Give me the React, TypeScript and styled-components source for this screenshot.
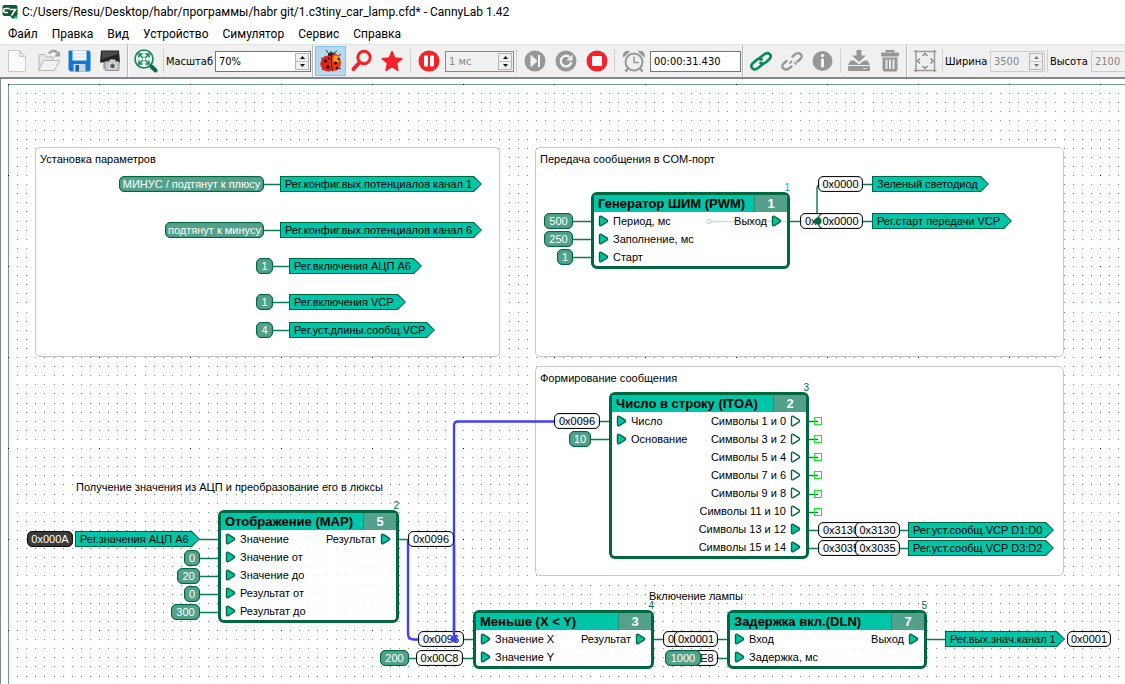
import React from "react";
import styled, { createGlobalStyle, css } from "styled-components";

const color = {
  ink: "#00683f",
  teal: "#00c5a8",
  sage: "#53a18b",
  blue: "#4040fa",
  chrome: "#f0f0f0",
  red: "#f5222a",
  gray: "#979797",
};

const Global = createGlobalStyle`
  *, *::before, *::after { box-sizing: border-box; }
  body { margin: 0; background: #fff; color: #000; }
  button, input { font: inherit; color: inherit; margin: 0; padding: 0; }
`;

/* ---------- window chrome ---------- */

const Window = styled.div`
  display: flex;
  flex-direction: column;
  height: 100vh;
  overflow: hidden;
  font-family: Roboto, "Open Sans", sans-serif;
  font-size: 12px;
`;

const TitleBar = styled.header`
  display: flex;
  flex: none;
  align-items: center;
  gap: 4px;
  height: 23px;
  padding-left: 2px;
`;

const WindowTitle = styled.h1`
  margin: 0;
  font-size: 12px;
  font-weight: 400;
  line-height: 20px;
  white-space: nowrap;
`;

const MenuBar = styled.nav`
  display: flex;
  flex: none;
  height: 21px;
  padding-left: 1px;
`;

const MenuItem = styled.button`
  border: 0;
  padding: 0 7px;
  background: transparent;
  line-height: 20px;
  white-space: nowrap;
`;

const Toolbar = styled.div`
  display: flex;
  flex: none;
  align-items: center;
  height: 33px;
  padding-left: 2px;
  overflow: hidden;
  background: ${color.chrome};
  border-top: 1px solid #e4e4e4;
  font-family: "DejaVu Sans Condensed", "DejaVu Sans", sans-serif;
  font-size: 11px;
`;

const ToolButton = styled.button<{ $active?: boolean }>`
  display: flex;
  flex: none;
  align-items: center;
  justify-content: center;
  width: 31px;
  height: 30px;
  border: 1px solid ${(p) => (p.$active ? "#7cc4f0" : "transparent")};
  background: ${(p) => (p.$active ? "#b4daf2" : "transparent")};
`;

const Divider = styled.span`
  flex: none;
  width: 1px;
  height: 24px;
  margin: 0 2px;
  background: #d0d0d0;
`;

const SectionEdge = styled.span`
  flex: none;
  width: 2px;
  height: 33px;
  margin: 0 1px;
  border-left: 1px solid #b8b8b8;
  border-right: 1px solid #fff;
`;

const FieldLabel = styled.label<{ $width: number }>`
  flex: none;
  width: ${(p) => p.$width}px;
  white-space: nowrap;
`;

type Tone = "normal" | "muted" | "light";

const Field = styled.span<{ $width: number; $tone: Tone; $indent?: number }>`
  display: flex;
  flex: none;
  width: ${(p) => p.$width}px;
  height: 21px;
  margin-left: ${(p) => p.$indent ?? 0}px;
  padding: 1px;
  border: 1px solid ${(p) => ({ normal: "#777", muted: "#888", light: "#ccc" })[p.$tone]};
  background: ${(p) => (p.$tone === "normal" ? "#fff" : color.chrome)};
  color: ${(p) => (p.$tone === "normal" ? "#000" : "#858585")};
`;

const FieldInput = styled.input`
  flex: 1;
  min-width: 0;
  padding-left: 2px;
  border: 0;
  outline: 0;
  background: transparent;
`;

const Stepper = styled.span`
  display: flex;
  flex: none;
  flex-direction: column;
  width: 14px;
  border: 1px solid #b5b5b5;
`;

const StepButton = styled.button`
  display: flex;
  flex: 1;
  align-items: center;
  justify-content: center;
  min-height: 0;
  border: 0;
  background: ${color.chrome};
  & + & {
    border-top: 1px solid #c4c4c4;
  }
`;

function NumberField(props: {
  id: string;
  value: string;
  width: number;
  tone: Tone;
  indent?: number;
  label?: string;
}) {
  const arrow = props.tone === "light" ? "#777" : "#111";
  return (
    <Field $width={props.width} $tone={props.tone} $indent={props.indent}>
      <FieldInput id={props.id} defaultValue={props.value} disabled={props.tone !== "normal"} aria-label={props.label} />
      <Stepper>
        <StepButton aria-label="Больше">
          <svg width="5" height="3"><path d="M0 3L2.5 0L5 3z" fill={arrow} /></svg>
        </StepButton>
        <StepButton aria-label="Меньше">
          <svg width="5" height="3"><path d="M0 0L2.5 3L5 0z" fill={arrow} /></svg>
        </StepButton>
      </Stepper>
    </Field>
  );
}

/* ---------- icons ---------- */

const Icon = ({ children, size = 24 }: { children: React.ReactNode; size?: number }) => (
  <svg width={size} height={size} viewBox="0 0 24 24" fill="none" aria-hidden="true">{children}</svg>
);

const LogoIcon = () => (
  <svg width="16" height="16" viewBox="0 0 16 16" aria-hidden="true">
    <path d="M2 1h12l1.500 1v9l-4.500 4l-3-3H2L.5 10.500V2z" fill="#0e5a36" />
    <path d="M7.500 4.500H3.500Q1.500 4.500 1.500 6.500T3.500 8.500H6" fill="none" stroke="#fff" strokeWidth="1.600" />
    <path d="M7.500 5.500H13.500L9.500 11.500" fill="none" stroke="#fff" strokeWidth="1.600" />
    <path d="M11 14.500l2-2.500h2.500v2.500z" fill="#35b27a" />
  </svg>
);

const NewIcon = () => (
  <Icon>
    <path d="M2.500 1.500H13.500L19.500 7.500V22.500H2.500z" fill="#fafafa" stroke="#c8c8c8" />
    <path d="M13.500 1.500V7.500H19.500z" fill="#e4e4e4" stroke="#c8c8c8" />
  </Icon>
);
const OpenIcon = () => (
  <Icon>
    <path d="M2 20V6.500Q2 5.500 3 5.500H8L9.500 8H16V11" fill="#e6e6e6" stroke="#b5b5b5" />
    <path d="M1.500 21.500L6.500 11.500H22.500L17.500 21.500z" fill="#f1f1f1" stroke="#b5b5b5" />
    <path d="M12 4.500Q16-.5 20.500 4" stroke="#a0a0a0" strokeWidth="2.500" />
    <path d="M23 2V7.500H17z" fill="#a0a0a0" />
  </Icon>
);
const SaveIcon = () => (
  <Icon>
    <path d="M1.500 1.500H21L22.500 3V21.500L21 22.500H2.500L.5 20.500V2.500z" fill="#1179d2" />
    <path d="M4.500 1.500H18.500V11.500H4.500z" fill="#f4f8fb" />
    <path d="M5 5H18M5 8H18" stroke="#d3dae0" />
    <path d="M5.500 15H17.500V22.500H5.500z" fill="#c9d6e0" />
    <path d="M7.500 16H11V22.500H7.500z" fill="#1463a8" />
  </Icon>
);
const CameraIcon = () => (
  <Icon>
    <path d="M2 1.500H20L21 13.500H1z" fill="#242424" />
    <path d="M3 2.500H19V5L3 10z" fill="#4a4a4a" />
    <path d="M4 13.500H9V20H4z" fill="#b5b5b5" />
    <rect x="6" y="12.500" width="14" height="9" rx="1" fill="#c9c9cd" stroke="#8d8d92" />
    <path d="M10 12.500L11 10.500H16L17 12.500" fill="#dedee0" />
    <circle cx="13.500" cy="17" r="3.300" fill="#8a8a90" stroke="#eee" />
    <circle cx="13.500" cy="17" r="1.400" fill="#444" />
  </Icon>
);
const FitIcon = () => (
  <Icon>
    <circle cx="10" cy="10" r="9" fill="#e2f2ea" stroke="#16805a" strokeWidth="1.600" />
    <path d="M5.500 5.500L14.500 14.500M14.500 5.500L5.500 14.500" stroke="#16805a" strokeWidth="1.400" />
    <path d="M8.800 8.800H11.200V11.200H8.800z" fill="#e2f2ea" />
    <path d="M5 8.500V5H8.500M11.500 5H15V8.500M15 11.500V15H11.500M8.500 15H5V11.500" stroke="#16805a" strokeWidth="1.500" />
    <path d="M17.500 17.500L21.500 21.500" stroke="#0d6b48" strokeWidth="4" strokeLinecap="round" />
  </Icon>
);
const BugIcon = () => (
  <Icon>
    <path d="M7 1L10 5M18 1.500L14 5.500M12 2V5M22 5L18 8M2 9L5 11M1 15H4M3 21L6 18M22 14H20M22 20L18 18" stroke="#222" />
    <path d="M9 4.500Q14 2 18 6L15 9L9 8z" fill="#20262a" />
    <ellipse cx="9" cy="14.500" rx="7.500" ry="8" fill="#e2231a" />
    <ellipse cx="16" cy="13.500" rx="6" ry="8.500" fill="#ee3b16" />
    <ellipse cx="17" cy="10" rx="3" ry="3.500" fill="#f9a01b" />
    <path d="M12.500 6.500Q11 14 14 22.500" stroke="#4a0d08" />
    <circle cx="6.500" cy="12" r="1.600" fill="#200" /><circle cx="9" cy="18" r="1.700" fill="#200" />
    <circle cx="16.500" cy="14" r="1.600" fill="#200" /><circle cx="18" cy="19" r="1.300" fill="#200" />
    <circle cx="10" cy="9.500" r="1.100" fill="#200" /><circle cx="19.500" cy="10" r="1.100" fill="#200" />
  </Icon>
);
const FindIcon = () => (
  <Icon>
    <circle cx="14" cy="8.500" r="6.200" stroke={color.red} strokeWidth="3" />
    <path d="M9.500 13.500L3.500 20" stroke={color.red} strokeWidth="4" strokeLinecap="round" />
  </Icon>
);
const StarIcon = () => (
  <Icon>
    <path d="M11 2.500L13.800 9L20.800 9.700L15.500 14.300L17 21.300L11 17.700L5 21.300L6.500 14.300L1.200 9.700L8.200 9z" fill={color.red} stroke={color.red} strokeWidth="1.500" strokeLinejoin="round" />
  </Icon>
);
const PauseIcon = () => (
  <Icon>
    <circle cx="12" cy="12" r="10.500" fill={color.red} />
    <rect x="7" y="6.500" width="4" height="11" rx="1" fill="#fff" /><rect x="13" y="6.500" width="4" height="11" rx="1" fill="#fff" />
  </Icon>
);
const StepIcon = () => (
  <Icon>
    <circle cx="12" cy="12" r="10.500" fill={color.gray} />
    <path d="M8 6.500L14 12L8 17.500z" fill="#f4f4f4" stroke="#f4f4f4" strokeLinejoin="round" />
    <path d="M16 6V18" stroke="#f4f4f4" strokeWidth="2" />
  </Icon>
);
const ReloadIcon = () => (
  <Icon>
    <circle cx="12" cy="12" r="10.500" fill={color.gray} />
    <path d="M15.500 8A5.300 5.300 0 1 0 17.300 13" stroke="#f4f4f4" strokeWidth="2.400" />
    <path d="M18.500 5.500V11.500H12.500z" fill="#f4f4f4" />
  </Icon>
);
const StopIcon = () => (
  <Icon>
    <circle cx="12" cy="12" r="10.500" fill={color.red} />
    <rect x="7" y="7" width="10" height="10" rx="1" fill="#fff" />
  </Icon>
);
const ClockIcon = () => (
  <Icon>
    <circle cx="13" cy="13" r="8.500" stroke={color.gray} strokeWidth="2" />
    <path d="M13 7.500V13.500H18" stroke={color.gray} strokeWidth="1.500" />
    <path d="M2.500 7.500Q2.500 2 8 2.500z" fill={color.gray} stroke={color.gray} strokeWidth="1.500" strokeLinejoin="round" />
    <path d="M23.200 7.500Q23.200 2 18 2.500z" fill={color.gray} stroke={color.gray} strokeWidth="1.500" strokeLinejoin="round" />
    <path d="M7 19.500L4.500 22.500M19 19.500L21.500 22.500" stroke={color.gray} strokeWidth="2.500" />
  </Icon>
);
const LinkIcon = () => (
  <Icon>
    <g stroke="#06895c" strokeWidth="2.700" strokeLinecap="round">
      <path d="M10 9.500L15 5.500Q18 3 20.500 5T20.500 10L16.500 13.500Q14 15.500 11.500 14" />
      <path d="M14 15L9 19Q6 21.500 3.500 19.500T3.500 14.500L7.500 11Q10 9 12.500 10.500" />
    </g>
  </Icon>
);
const UnlinkIcon = () => (
  <Icon>
    <g stroke={color.gray} strokeWidth="2.300" strokeLinecap="round">
      <path d="M12.500 7.500L15 5.500Q18 3 20.500 5T20.500 10L17.500 12.500" />
      <path d="M11.500 17.500L9 19.500Q6 21.500 3.500 19.500T3.500 14.500L6.500 12" />
      <path d="M10 14L11.500 12.500M16 15L15 13.500" strokeWidth="1.800" />
    </g>
  </Icon>
);
const InfoIcon = () => (
  <Icon>
    <circle cx="11.500" cy="12" r="10" fill={color.gray} />
    <circle cx="11.500" cy="6.500" r="1.700" fill="#f4f4f4" />
    <rect x="10" y="9.500" width="3" height="9" rx="1" fill="#f4f4f4" />
  </Icon>
);
const DownloadIcon = () => (
  <Icon>
    <path d="M9.500 1H14.500V6.500H19L12 13L5 6.500H9.500z" fill={color.gray} />
    <path d="M3.500 11.500H7L12 15.500L17 11.500H20.500L23 16H1z" fill={color.gray} />
    <rect x="1" y="17" width="22" height="5" rx="1" fill={color.gray} />
    <path d="M16 19.500H20" stroke="#ddd" />
  </Icon>
);
const TrashIcon = () => (
  <Icon>
    <path d="M8.500 3.500V2H15.500V3.500" stroke={color.gray} strokeWidth="2" />
    <rect x="3" y="3.500" width="18" height="4" rx="1" fill={color.gray} />
    <path d="M4.500 8.500H19.500V21L18 22.500H6L4.500 21z" fill={color.gray} />
    <path d="M8.500 10.500V20M12 10.500V20M15.500 10.500V20" stroke="#f0f0f0" strokeWidth="1.800" />
  </Icon>
);
const FrameIcon = () => (
  <Icon>
    <path d="M3 1V23M21.500 1V23M1 2.500H23.500M1 21.500H23.500" stroke="#999" strokeWidth="1.500" />
    <path d="M9.500 7L12 4.500L14.500 7M9.500 17L12 19.500L14.500 17M7 9.500L4.500 12L7 14.500M17.500 9.500L20 12L17.500 14.500" stroke="#888" strokeWidth="1.500" />
  </Icon>
);

/* ---------- diagram ---------- */

const Workspace = styled.main`
  flex: 1;
  min-height: 0;
  padding: 5px 0 0 7px;
  overflow: hidden;
  border-top: 2px solid #828790;
  border-left: 1px solid #828790;
  background: #fff;
`;

const Sheet = styled.div`
  position: relative;
  height: 100%;
  font-family: "Liberation Sans", Arial, sans-serif;
  font-size: 11px;
  line-height: 14px;
`;

const Layer = styled.svg`
  position: absolute;
  inset: 0;
  width: 100%;
  height: 100%;
`;

interface Spot {
  $x: number;
  $y: number;
  $w?: number;
}

const placed = css<Spot>`
  position: absolute;
  left: ${(p) => p.$x}px;
  top: ${(p) => p.$y}px;
  ${(p) => p.$w && `width: ${p.$w}px;`}
`;

const Group = styled.section<Spot>`
  ${placed}
  height: 210px;
  padding: 4px;
  border: 1px solid #c8c8c8;
  border-radius: 5px;
  background: #fff;
`;

const Caption = styled.p<Spot>`
  ${placed}
  margin: 0;
  white-space: nowrap;
`;

const GroupTitle = styled.h2`
  margin: 0;
  font-size: 11px;
  font-weight: 400;
`;

const pill = css`
  ${placed}
  height: 16px;
  border-radius: 5px;
  text-align: center;
  white-space: nowrap;
`;

const Constant = styled.div<Spot>`
  ${pill}
  border: 1px solid ${color.ink};
  box-shadow: inset 0 0 1px ${color.ink};
  background: ${color.sage};
  color: #fff;
`;

const Value = styled.div<Spot & { $dark?: boolean }>`
  ${pill}
  border: 1px solid #111;
  box-shadow: inset 0 0 1px #111;
  background: ${(p) => (p.$dark ? "#3c3c3c" : "rgba(255, 255, 255, 0.88)")};
  color: ${(p) => (p.$dark ? "#fff" : "#000")};
`;

const arrowShape = css`
  clip-path: polygon(0 0, calc(100% - 8px) 0, 100% 50%, calc(100% - 8px) 100%, 0 100%);
`;

const RegisterEdge = styled.div<Spot>`
  ${placed}
  ${arrowShape}
  height: 16px;
  padding: 1px;
  background: ${color.ink};
`;

const RegisterName = styled.div`
  ${arrowShape}
  padding-left: 4px;
  background: ${color.teal};
  white-space: nowrap;
`;

const Register = ({ x, y, w, children }: { x: number; y: number; w: number; children: string }) => (
  <RegisterEdge $x={x} $y={y} $w={w}>
    <RegisterName>{children}</RegisterName>
  </RegisterEdge>
);

const BlockFrame = styled.article<Spot>`
  ${placed}
  border: 3px solid ${color.ink};
  border-radius: 6px;
  background: rgba(255, 255, 255, 0.8);
`;

const BlockHeader = styled.header`
  display: flex;
  height: 17px;
  background: ${color.teal};
  font-size: 13px;
  font-weight: 700;
  line-height: 17px;
  white-space: nowrap;
`;

const BlockName = styled.h3`
  flex: 1;
  min-width: 0;
  margin: 0;
  padding-left: 4px;
  font-size: 13px;
`;

const BlockId = styled.span`
  flex: none;
  width: 33px;
  border-left: 1px solid #2b8a70;
  background: ${color.sage};
  color: #fff;
  text-align: center;
`;

const Order = styled.span<{ $first?: boolean }>`
  position: absolute;
  right: -3px;
  bottom: calc(100% + 2px);
  color: ${(p) => (p.$first ? "#1a9fdc" : color.ink)};
  font-size: 10px;
  line-height: 11px;
`;

const Ports = styled.div`
  display: flex;
  justify-content: space-between;
  padding: 0 5px 0 4px;
`;

const PortList = styled.ul`
  margin: 0;
  padding: 0;
  list-style: none;
`;

const Port = styled.li`
  display: flex;
  align-items: center;
  justify-content: flex-end;
  gap: 4px;
  height: 18px;
  white-space: nowrap;
`;

const InputPort = styled(Port)`
  justify-content: flex-start;
`;

const PortMark = ({ hollow }: { hollow?: boolean }) => (
  <svg width="11" height="12" viewBox="0 0 11 12" aria-hidden="true">
    <path d="M1.500 2.500Q1.500 .7 3.200 1.300L8.800 4.800Q10.300 6 8.800 7.200L3.200 10.700Q1.500 11.300 1.500 9.500z" fill={hollow ? "#fff" : color.teal} stroke={color.ink} strokeWidth="1.400" />
  </svg>
);

interface BlockProps {
  x: number;
  y: number;
  w: number;
  name: string;
  id: number;
  order: number;
  inputs: string[];
  outputs: string[];
  unused?: number;
}

function Block({ x, y, w, name, id, order, inputs, outputs, unused = 0 }: BlockProps) {
  return (
    <BlockFrame $x={x} $y={y} $w={w}>
      <Order $first={order === 1}>{order}</Order>
      <BlockHeader>
        <BlockName>{name}</BlockName>
        <BlockId>{id}</BlockId>
      </BlockHeader>
      <Ports>
        <PortList>
          {inputs.map((label) => (
            <InputPort key={label}><PortMark />{label}</InputPort>
          ))}
        </PortList>
        <PortList>
          {outputs.map((label, i) => (
            <Port key={label}>{label}<PortMark hollow={i < unused} /></Port>
          ))}
        </PortList>
      </Ports>
    </BlockFrame>
  );
}

const gridSteps = [0, 9, 18, 27, 36, 46, 55, 64, 73, 82];
const openPins = [337, 355, 373, 391, 410, 428];

const Grid = () => (
  <Layer aria-hidden="true" shapeRendering="crispEdges">
    <defs>
      <pattern id="dots" width="91" height="91" patternUnits="userSpaceOnUse">
        {gridSteps.map((gy) =>
          gridSteps.map((gx) => (
            <rect key={`${gx}-${gy}`} x={gx} y={gy} width="1" height="1" fill={gx + gy === 0 ? "#000" : "#6fa386"} />
          )),
        )}
      </pattern>
      <pattern id="edgeX" width="91" height="1" patternUnits="userSpaceOnUse">
        <rect width="91" height="1" fill="#6fa386" /><rect width="1" height="1" fill="#000" />
      </pattern>
      <pattern id="edgeY" width="1" height="91" patternUnits="userSpaceOnUse">
        <rect width="1" height="91" fill="#6fa386" /><rect width="1" height="1" fill="#000" />
      </pattern>
    </defs>
    <rect width="100%" height="100%" fill="url(#dots)" />
    <rect width="100%" height="1" fill="url(#edgeX)" />
    <rect width="1" height="100%" fill="url(#edgeY)" />
  </Layer>
);

const wires = [
  "M256 100H272M256 146H272M265 182H281M265 218H281M265 246H281",
  "M565 137H583M565 155H583M565 173H583",
  "M782 137H864M809 137V104Q809 100 813 100H864",
  "M592 337H601M583 355H601M801 446H900M801 464H900",
  "M191 455H210M192 474H210M192 492H210M192 510H210M192 528H210M391 455H400",
  "M456 555H465M401 574H465M646 555H719M701 574H719M919 555H937",
].join("");

const Wires = () => (
  <Layer aria-hidden="true" fill="none">
    <g transform="translate(0 .5)">
      <path d="M703 137H782" stroke={color.ink} strokeWidth="1.400" />
      <circle cx="701" cy="137" r="2" stroke={color.ink} strokeWidth="1.400" />
      <path d={wires} stroke="#0b7a55" strokeWidth="1.400" />
      {openPins.map((y) => (
        <g key={y}>
          <path d={`M801 ${y}H810`} stroke="#0b7a55" strokeWidth="1.400" />
          <rect x="806.500" y={y - 4} width="7" height="7" stroke="#12f01f" />
        </g>
      ))}
      <path d="M400 455V549Q400 555 406 555H446V341Q446 337 450 337H592" stroke={color.blue} strokeWidth="2.400" />
    </g>
  </Layer>
);

const Joints = () => (
  <Layer aria-hidden="true">
    <circle cx="810" cy="137" r="3.500" fill={color.ink} />
    <path d="M446 462V555" stroke={color.blue} strokeWidth="2.400" />
    <circle cx="446" cy="555" r="3.500" fill={color.blue} />
  </Layer>
);

const symbols = ["1 и 0", "3 и 2", "5 и 4", "7 и 6", "9 и 8", "11 и 10", "13 и 12", "15 и 14"].map((s) => `Символы ${s}`);

const Diagram = () => (
  <Sheet>
    <Grid />
    <Group $x={27} $y={63} $w={465}><GroupTitle>Установка параметров</GroupTitle></Group>
    <Group $x={527} $y={63} $w={529}><GroupTitle>Передача сообщения в COM-порт</GroupTitle></Group>
    <Group $x={527} $y={282} $w={529}><GroupTitle>Формирование сообщения</GroupTitle></Group>
    <Caption $x={68} $y={396}>Получение значения из АЦП и преобразование его в люксы</Caption>
    <Caption $x={641} $y={505}>Включение лампы</Caption>
    <Wires />

    <Constant $x={111} $y={92} $w={145}>МИНУС / подтянут к плюсу</Constant>
    <Register x={272} y={92} w={202}>Рег.конфиг.вых.потенциалов канал 1</Register>
    <Constant $x={157} $y={138} $w={99}>подтянут к минусу</Constant>
    <Register x={272} y={138} w={202}>Рег.конфиг.вых.потенциалов канал 6</Register>
    <Constant $x={248} $y={174} $w={17}>1</Constant>
    <Register x={281} y={174} w={133}>Рег.включения АЦП A6</Register>
    <Constant $x={248} $y={210} $w={17}>1</Constant>
    <Register x={281} y={210} w={117}>Рег.включения VCP</Register>
    <Constant $x={248} $y={238} $w={17}>4</Constant>
    <Register x={281} y={238} w={146}>Рег.уст.длины.сообщ.VCP</Register>

    <Constant $x={536} $y={129} $w={29}>500</Constant>
    <Constant $x={536} $y={147} $w={29}>250</Constant>
    <Constant $x={549} $y={165} $w={16}>1</Constant>
    <Block x={583} y={108} w={199} name="Генератор ШИМ (PWM)" id={1} order={1}
      inputs={["Период, мс", "Заполнение, мс", "Старт"]} outputs={["Выход"]} />
    <Value $x={792} $y={129} $w={46}>0x0000</Value>
    <Value $x={810} $y={129} $w={45}>0x0000</Value>
    <Value $x={810} $y={92} $w={45}>0x0000</Value>
    <Register x={864} y={92} w={117}>Зеленый светодиод</Register>
    <Register x={864} y={129} w={140}>Рег.старт передачи VCP</Register>

    <Value $x={546} $y={329} $w={46}>0x0096</Value>
    <Constant $x={561} $y={347} $w={22}>10</Constant>
    <Block x={601} y={308} w={200} name="Число в строку (ITOA)" id={2} order={3}
      inputs={["Число", "Основание"]} outputs={symbols} unused={6} />
    <Value $x={810} $y={438} $w={46}>0x3130</Value>
    <Value $x={847} $y={438} $w={45}>0x3130</Value>
    <Register x={900} y={438} w={146}>Рег.уст.сообщ.VCP D1:D0</Register>
    <Value $x={810} $y={456} $w={46}>0x3035</Value>
    <Value $x={847} $y={456} $w={45}>0x3035</Value>
    <Register x={900} y={456} w={146}>Рег.уст.сообщ.VCP D3:D2</Register>

    <Value $x={19} $y={447} $w={46} $dark>0x000A</Value>
    <Register x={67} y={447} w={125}>Рег.значения АЦП A6</Register>
    <Constant $x={176} $y={466} $w={16}>0</Constant>
    <Constant $x={169} $y={484} $w={23}>20</Constant>
    <Constant $x={176} $y={502} $w={16}>0</Constant>
    <Constant $x={163} $y={520} $w={29}>300</Constant>
    <Block x={210} y={426} w={181} name="Отображение (MAP)" id={5} order={2}
      inputs={["Значение", "Значение от", "Значение до", "Результат от", "Результат до"]} outputs={["Результат"]} />
    <Value $x={400} $y={447} $w={46}>0x0096</Value>

    <Value $x={410} $y={547} $w={46}>0x0096</Value>
    <Constant $x={372} $y={566} $w={29}>200</Constant>
    <Value $x={408} $y={566} $w={47}>0x00C8</Value>
    <Block x={465} y={526} w={181} name="Меньше (X < Y)" id={3} order={4}
      inputs={["Значение X", "Значение Y"]} outputs={["Результат"]} />
    <Value $x={655} $y={547} $w={46}>0x0001</Value>
    <Value $x={666} $y={547} $w={44}>0x0001</Value>
    <Value $x={664} $y={566} $w={46}>0x03E8</Value>
    <Constant $x={657} $y={566} $w={36}>1000</Constant>
    <Block x={719} y={526} w={200} name="Задержка вкл.(DLN)" id={7} order={5}
      inputs={["Вход", "Задержка, мс"]} outputs={["Выход"]} />
    <Register x={937} y={547} w={120}>Рег.вых.знач.канал 1</Register>
    <Value $x={1059} $y={547} $w={44}>0x0001</Value>
    <Joints />
  </Sheet>
);

const menu = ["Файл", "Правка", "Вид", "Устройство", "Симулятор", "Сервис", "Справка"];

export default function App() {
  return (
    <Window>
      <Global />
      <TitleBar>
        <LogoIcon />
        <WindowTitle>C:/Users/Resu/Desktop/habr/программы/habr git/1.c3tiny_car_lamp.cfd* - CannyLab 1.42</WindowTitle>
      </TitleBar>
      <MenuBar>
        {menu.map((item) => <MenuItem key={item}>{item}</MenuItem>)}
      </MenuBar>
      <Toolbar>
        <ToolButton aria-label="Создать"><NewIcon /></ToolButton>
        <ToolButton aria-label="Открыть"><OpenIcon /></ToolButton>
        <ToolButton aria-label="Сохранить"><SaveIcon /></ToolButton>
        <ToolButton aria-label="Снимок"><CameraIcon /></ToolButton>
        <SectionEdge />
        <ToolButton aria-label="Вписать"><FitIcon /></ToolButton>
        <Divider />
        <FieldLabel htmlFor="scale" $width={49}>Масштаб</FieldLabel>
        <NumberField id="scale" value="70%" width={96} tone="normal" />
        <SectionEdge />
        <ToolButton $active aria-label="Отладка"><BugIcon /></ToolButton>
        <ToolButton aria-label="Найти"><FindIcon /></ToolButton>
        <ToolButton aria-label="Избранное"><StarIcon /></ToolButton>
        <Divider />
        <ToolButton aria-label="Пауза"><PauseIcon /></ToolButton>
        <NumberField id="tick" label="Такт" value="1 мс" width={69} tone="muted" indent={1} />
        <Divider />
        <ToolButton aria-label="Шаг"><StepIcon /></ToolButton>
        <ToolButton aria-label="Сброс"><ReloadIcon /></ToolButton>
        <ToolButton aria-label="Стоп"><StopIcon /></ToolButton>
        <Divider />
        <ToolButton aria-label="Время"><ClockIcon /></ToolButton>
        <Field $width={91} $tone="normal" $indent={2}>
          <FieldInput aria-label="Время симуляции" defaultValue="00:00:31.430" />
        </Field>
        <SectionEdge />
        <ToolButton aria-label="Подключить"><LinkIcon /></ToolButton>
        <ToolButton aria-label="Отключить"><UnlinkIcon /></ToolButton>
        <ToolButton aria-label="Сведения"><InfoIcon /></ToolButton>
        <Divider />
        <ToolButton aria-label="Записать"><DownloadIcon /></ToolButton>
        <ToolButton aria-label="Стереть"><TrashIcon /></ToolButton>
        <SectionEdge />
        <ToolButton aria-label="Размер листа"><FrameIcon /></ToolButton>
        <Divider />
        <FieldLabel htmlFor="sheet-width" $width={45}>Ширина</FieldLabel>
        <NumberField id="sheet-width" value="3500" width={55} tone="light" />
        <Divider />
        <FieldLabel htmlFor="sheet-height" $width={41}>Высота</FieldLabel>
        <NumberField id="sheet-height" value="2100" width={55} tone="light" />
      </Toolbar>
      <Workspace>
        <Diagram />
      </Workspace>
    </Window>
  );
}
